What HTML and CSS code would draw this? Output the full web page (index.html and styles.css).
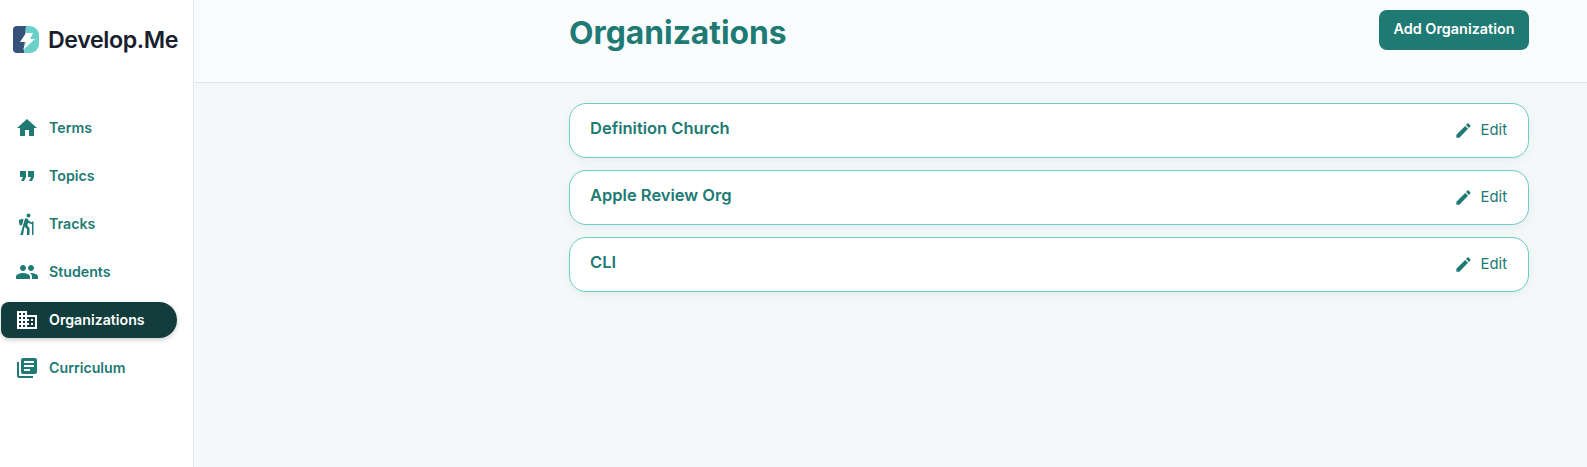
FILE: index.html
```html
<!DOCTYPE html>
<html>
<head>
    <title>Organizations</title>
    <link rel="stylesheet" href="styles.css">
</head>
<body>
    <div class="sidebar">
        <div class="brand">
            <svg class="brand-mark" viewBox="0 0 26 27">
                <path d="M4 0h9l-2 27H4a4 4 0 0 1-4-4V4a4 4 0 0 1 4-4z" fill="#34527a"/>
                <path d="M13 0h4a9 9 0 0 1 9 9v9a9 9 0 0 1-9 9h-6z" fill="#6bcfca"/>
                <path d="M13 7h7l-3 6h5L10 24l3-8H7z" fill="#fff"/>
            </svg>
            <span class="brand-name">Develop.Me</span>
        </div>
        <ul class="nav">
            <li class="nav-item">
                <svg viewBox="0 0 24 24"><path d="M10 20v-6h4v6h5v-8h3L12 3 2 12h3v8z"/></svg>
                Terms
            </li>
            <li class="nav-item">
                <svg viewBox="0 0 24 24"><path d="M6 17h3l2-4V7H5v6h3zm8 0h3l2-4V7h-6v6h3z"/></svg>
                Topics
            </li>
            <li class="nav-item">
                <svg viewBox="0 0 24 24"><path d="M13.500 5.500a2 2 0 1 0 0-4 2 2 0 0 0 0 4zM10 6.500h2.500L14 9l3 1.500v1.700l-4-1.500-.7 2.800 2.200 2.500V23H12v-6l-2.500-2.500L8 23H5.300zM8.500 6.800L5 7.600c-.8.200-1.300 1-1.100 1.800l.8 4 2.500-.5zM17 9.500h1.500V23H17z"/></svg>
                Tracks
            </li>
            <li class="nav-item">
                <svg viewBox="0 0 24 24"><path d="M16 11c1.660 0 2.990-1.340 2.990-3S17.660 5 16 5c-1.660 0-3 1.340-3 3s1.340 3 3 3zm-8 0c1.660 0 2.990-1.340 2.990-3S9.660 5 8 5C6.340 5 5 6.340 5 8s1.340 3 3 3zm0 2c-2.330 0-7 1.170-7 3.500V19h14v-2.500c0-2.330-4.670-3.500-7-3.500zm8 0c-.29 0-.62.02-.97.05 1.160.84 1.970 1.970 1.970 3.450V19h6v-2.500c0-2.330-4.670-3.500-7-3.500z"/></svg>
                Students
            </li>
            <li class="nav-item active">
                <svg viewBox="0 0 24 24"><path d="M12 7V3H2v18h20V7H12zM6 19H4v-2h2v2zm0-4H4v-2h2v2zm0-4H4V9h2v2zm0-4H4V5h2v2zm4 12H8v-2h2v2zm0-4H8v-2h2v2zm0-4H8V9h2v2zm0-4H8V5h2v2zm10 12h-8v-2h2v-2h-2v-2h2v-2h-2V9h8v10zm-2-8h-2v2h2v-2zm0 4h-2v2h2v-2z"/></svg>
                Organizations
            </li>
            <li class="nav-item">
                <svg viewBox="0 0 24 24"><path d="M4 6H2v14c0 1.100.9 2 2 2h14v-2H4V6zm16-4H8c-1.100 0-2 .9-2 2v12c0 1.100.9 2 2 2h12c1.100 0 2-.9 2-2V4c0-1.100-.9-2-2-2zm-1 9H9V9h10v2zm-4 4H9v-2h6v2zm4-8H9V5h10v2z"/></svg>
                Curriculum
            </li>
        </ul>
    </div>

    <div class="main">
        <div class="header">
            <div class="header-inner">
                <h1>Organizations</h1>
                <button class="button">Add Organization</button>
            </div>
        </div>
        <div class="list">
            <div class="card">
                <span class="card-name">Definition Church</span>
                <span class="edit">
                    <svg viewBox="0 0 24 24"><path d="M3 17.250V21h3.750L17.810 9.940l-3.750-3.750L3 17.250zM20.710 7.040c.39-.39.39-1.020 0-1.410l-2.340-2.340c-.39-.39-1.020-.39-1.410 0l-1.830 1.830 3.750 3.750 1.830-1.830z"/></svg>
                    Edit
                </span>
            </div>
            <div class="card">
                <span class="card-name">Apple Review Org</span>
                <span class="edit">
                    <svg viewBox="0 0 24 24"><path d="M3 17.250V21h3.750L17.810 9.940l-3.750-3.750L3 17.250zM20.710 7.040c.39-.39.39-1.020 0-1.410l-2.340-2.340c-.39-.39-1.020-.39-1.410 0l-1.830 1.830 3.750 3.750 1.830-1.830z"/></svg>
                    Edit
                </span>
            </div>
            <div class="card">
                <span class="card-name">CLI</span>
                <span class="edit">
                    <svg viewBox="0 0 24 24"><path d="M3 17.250V21h3.750L17.810 9.940l-3.750-3.750L3 17.250zM20.710 7.040c.39-.39.39-1.020 0-1.410l-2.340-2.340c-.39-.39-1.020-.39-1.410 0l-1.830 1.830 3.750 3.750 1.830-1.830z"/></svg>
                    Edit
                </span>
            </div>
        </div>
    </div>
</body>
</html>
```

FILE: styles.css
```css
body {
    font-family: Inter, "Liberation Sans", sans-serif;
    display: flex;
    height: 100vh;
    margin: 0;
    overflow: hidden;
    color: #207a74;
    background-color: #f5f8f9;
}
.sidebar {
    width: 193px;
    flex-shrink: 0;
    background-color: #fff;
    border-right: 1px solid #e3e8ea;
}
.brand {
    display: flex;
    align-items: center;
    gap: 9px;
    padding: 26px 0 0 13px;
    height: 27px;
}
.brand-mark {
    width: 26px;
    height: 27px;
}
.brand-name {
    font-size: 23.200px;
    font-weight: 600;
    letter-spacing: -0.4px;
    color: #17202c;
}
.nav {
    list-style-type: none;
    margin: 56.500px 0 0 1px;
    padding: 0;
    width: 176px;
}
.nav-item {
    display: flex;
    align-items: center;
    gap: 10px;
    height: 36px;
    margin-bottom: 12px;
    padding-left: 14px;
    border-radius: 8px 18px 18px 8px;
    font-size: 14.200px;
    font-weight: 600;
}
.nav-item svg {
    width: 24px;
    height: 24px;
    fill: currentColor;
}
.nav-item.active {
    background-color: #123d3c;
    color: #fff;
    box-shadow: 0 2px 5px rgba(0, 0, 0, 0.2);
}
.main {
    flex-grow: 1;
}
.header {
    height: 82px;
    background-color: #f9fcfd;
    border-bottom: 1px solid #e2e5e6;
}
.header-inner,
.list {
    width: 960px;
    margin-left: auto;
    margin-right: 58px;
}
.header-inner {
    display: flex;
    justify-content: space-between;
    align-items: flex-start;
}
h1 {
    margin: 13px 0 0;
    font-size: 31.800px;
    font-weight: 700;
    line-height: 40px;
}
.button {
    margin-top: 10px;
    padding: 0 0 3px;
    width: 150px;
    height: 40px;
    font-family: inherit;
    font-size: 14.400px;
    font-weight: 600;
    background-color: #207a74;
    color: #fff;
    border: none;
    border-radius: 8px;
}
.list {
    display: flex;
    flex-direction: column;
    gap: 12.500px;
    padding-top: 20px;
}
.card {
    display: flex;
    justify-content: space-between;
    align-items: center;
    box-sizing: border-box;
    height: 54.500px;
    padding: 0 21px 0 20px;
    background-color: #fff;
    border: 1px solid #6ccdc8;
    border-radius: 17px;
    box-shadow: 0 3px 8px rgba(32, 122, 116, 0.08);
}
.card-name {
    margin-bottom: 5px;
    font-size: 16.500px;
    font-weight: 600;
}
.edit {
    display: flex;
    align-items: center;
    gap: 8px;
    font-size: 14.800px;
}
.edit svg {
    width: 19px;
    height: 19px;
    fill: currentColor;
}
```
